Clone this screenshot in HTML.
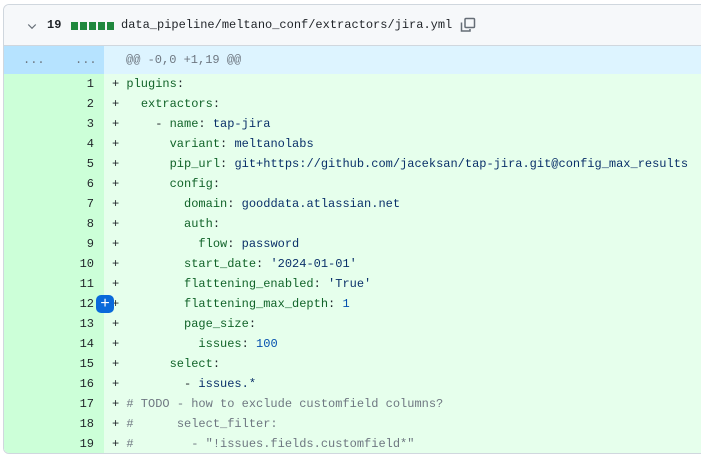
<!DOCTYPE html>
<html><head><meta charset="utf-8"><style>
*{margin:0;padding:0;box-sizing:border-box}
body{width:701px;height:458px;background:#fff;overflow:hidden;font-family:"Liberation Mono",monospace;font-size:12px;color:#1f2328;position:relative}
.box{position:absolute;left:3px;top:4px;width:710px;height:450px;border:1px solid #d0d7de;border-radius:6px;overflow:hidden}
.hdr{position:absolute;left:0;top:0;right:0;height:41px;background:#f6f8fa;border-bottom:1px solid #d0d7de}
.hunk{position:absolute;left:0;top:41px;right:0;height:28px;background:#ddf4ff;color:#6e7781}
.hg{position:absolute;left:0;top:0;width:100px;height:28px;background:#b6e3ff}
.row{position:absolute;left:0;right:0;height:20px;line-height:20px;background:#e6ffec;white-space:pre}
.num{position:absolute;left:0;top:0;width:100px;height:20px;background:#ccffd8;text-align:right;padding-right:10px}
.code{position:absolute;left:108px;top:0}
.k{color:#116329}.s{color:#0a3069}.n{color:#0550ae}.c{color:#6e7781}
</style></head><body>
<div class="box">
 <div class="hdr">
  <svg style="position:absolute;left:22px;top:15px" width="12" height="12" viewBox="0 0 16 16"><path d="M3 6l5 5 5-5" fill="none" stroke="#656d76" stroke-width="1.6"/></svg>
  <span style="position:absolute;left:43px;top:13px;font-weight:bold;color:#1f2328">19</span>
  <span style="position:absolute;left:67px;top:17px;width:43px;height:8px;background:repeating-linear-gradient(90deg,#1f883d 0 7px,transparent 7px 9px)"></span>
  <span style="position:absolute;left:117px;top:13px">data_pipeline/meltano_conf/extractors/jira.yml</span>
  <svg style="position:absolute;left:456px;top:12px" width="16" height="16" viewBox="0 0 16 16"><path d="M1.5 5.5v8.5h8.5v-2" fill="none" stroke="#656d76" stroke-width="1.5"/><rect x="5" y="1.5" width="9.5" height="9" rx="1" fill="none" stroke="#656d76" stroke-width="1.5"/></svg>
 </div>
 <div class="hunk"><div class="hg"></div>
  <span style="position:absolute;left:19px;top:7px">...</span><span style="position:absolute;left:71px;top:7px">...</span>
  <span style="position:absolute;left:122px;top:7px">@@ -0,0 +1,19 @@</span></div>
 <div class="row" style="top:69px"><div class="num">1</div><span class="code">+ <span class="k">plugins</span>:</span></div>
 <div class="row" style="top:89px"><div class="num">2</div><span class="code">+   <span class="k">extractors</span>:</span></div>
 <div class="row" style="top:109px"><div class="num">3</div><span class="code">+     - <span class="k">name</span>: <span class="s">tap-jira</span></span></div>
 <div class="row" style="top:129px"><div class="num">4</div><span class="code">+       <span class="k">variant</span>: <span class="s">meltanolabs</span></span></div>
 <div class="row" style="top:149px"><div class="num">5</div><span class="code">+       <span class="k">pip_url</span>: <span class="s">git+https://github.com/jaceksan/tap-jira.git@config_max_results</span></span></div>
 <div class="row" style="top:169px"><div class="num">6</div><span class="code">+       <span class="k">config</span>:</span></div>
 <div class="row" style="top:189px"><div class="num">7</div><span class="code">+         <span class="k">domain</span>: <span class="s">gooddata.atlassian.net</span></span></div>
 <div class="row" style="top:209px"><div class="num">8</div><span class="code">+         <span class="k">auth</span>:</span></div>
 <div class="row" style="top:229px"><div class="num">9</div><span class="code">+           <span class="k">flow</span>: <span class="s">password</span></span></div>
 <div class="row" style="top:249px"><div class="num">10</div><span class="code">+         <span class="k">start_date</span>: <span class="s">'2024-01-01'</span></span></div>
 <div class="row" style="top:269px"><div class="num">11</div><span class="code">+         <span class="k">flattening_enabled</span>: <span class="s">'True'</span></span></div>
 <div class="row" style="top:289px"><div class="num">12</div><span class="code">+         <span class="k">flattening_max_depth</span>: <span class="n">1</span></span>
  <div style="position:absolute;left:92px;top:1px;width:18px;height:18px;background:#0969da;border-radius:5px;color:#fff;text-align:center;line-height:17px;font-size:16px;font-family:'Liberation Sans',sans-serif">+</div></div>
 <div class="row" style="top:309px"><div class="num">13</div><span class="code">+         <span class="k">page_size</span>:</span></div>
 <div class="row" style="top:329px"><div class="num">14</div><span class="code">+           <span class="k">issues</span>: <span class="n">100</span></span></div>
 <div class="row" style="top:349px"><div class="num">15</div><span class="code">+       <span class="k">select</span>:</span></div>
 <div class="row" style="top:369px"><div class="num">16</div><span class="code">+         - <span class="s">issues.*</span></span></div>
 <div class="row" style="top:389px"><div class="num">17</div><span class="code">+ <span class="c"># TODO - how to exclude customfield columns?</span></span></div>
 <div class="row" style="top:409px"><div class="num">18</div><span class="code">+ <span class="c">#      select_filter:</span></span></div>
 <div class="row" style="top:429px"><div class="num">19</div><span class="code">+ <span class="c">#        - "!issues.fields.customfield*"</span></span></div>
</div>
</body></html>
